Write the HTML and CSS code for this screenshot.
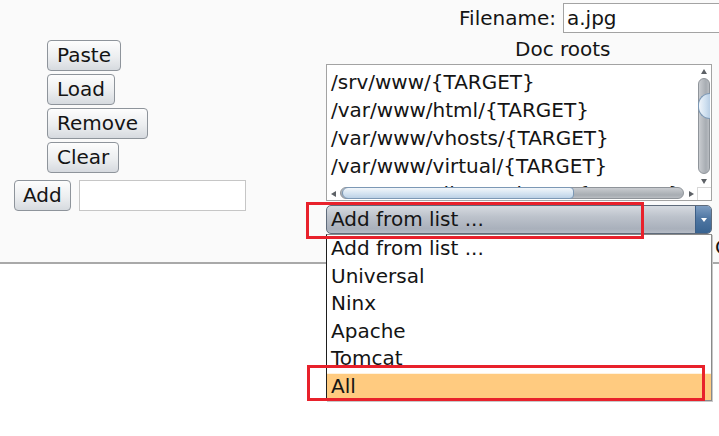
FILE: index.html
```html
<!DOCTYPE html>
<html>
<head>
<meta charset="utf-8">
<link rel="stylesheet" href="styles.css">
</head>
<body>
<div class="panel">
  <div class="left">
    <div class="btn-stack">
      <button class="btn">Paste</button>
      <button class="btn">Load</button>
      <button class="btn">Remove</button>
      <button class="btn">Clear</button>
    </div>
    <div class="add-row">
      <button class="btn btn-add">Add</button>
      <input class="add-field" type="text">
    </div>
  </div>
  <div class="right">
    <div class="fname-row">
      <span class="fname-label">Filename:</span>
      <input class="fname-input" type="text" value="a.jpg">
    </div>
    <div class="doc-label">Doc roots</div>
    <div class="listbox">
      <div class="list-view">
        <div class="list-rows">
          <div class="list-row">/var/www/{TARGET}</div>
          <div class="list-row">/srv/www/{TARGET}</div>
          <div class="list-row">/var/www/html/{TARGET}</div>
          <div class="list-row">/var/www/vhosts/{TARGET}</div>
          <div class="list-row">/var/www/virtual/{TARGET}</div>
          <div class="list-row">/var/www/clients/vhosts/{TARGET}</div>
        </div>
      </div>
      <div class="vscroll">
        <div class="arrow"><span class="tri tri-up"></span></div>
        <div class="vtrack"><div class="vthumb"></div></div>
        <div class="arrow"><span class="tri tri-down"></span></div>
      </div>
      <div class="hscroll">
        <div class="harrow"><span class="tri tri-left"></span></div>
        <div class="htrack"><div class="hthumb"></div></div>
        <div class="harrow"><span class="tri tri-right"></span></div>
      </div>
      <div class="corner"></div>
    </div>
    <div class="combo">
      <span class="combo-text">Add from list ...</span>
      <span class="combo-btn"><span class="tri tri-white"></span></span>
    </div>
    <div class="clip-row">Custom</div>
  </div>
</div>

<div class="popup">
  <div class="pop-row">Add from list ...</div>
  <div class="pop-row">Universal</div>
  <div class="pop-row">Ninx</div>
  <div class="pop-row">Apache</div>
  <div class="pop-row">Tomcat</div>
  <div class="pop-row selected">All</div>
</div>

<div class="mark mark-combo"></div>
<div class="mark mark-all"></div>
</body>
</html>
```

FILE: styles.css
```css
html, body {
  margin: 0;
  padding: 0;
}
body {
  width: 719px;
  height: 436px;
  overflow: hidden;
  position: relative;
  background: #ffffff;
  font-family: "DejaVu Sans", sans-serif;
  font-size: 20px;
  color: #141414;
}

.panel {
  display: flex;
  height: 262px;
  background: #fafafa;
  border-bottom: 2px solid #a9a9a9;
}

/* left column */
.left {
  width: 326px;
  flex: none;
  padding-top: 40px;
  display: flex;
  flex-direction: column;
}
.btn-stack {
  margin-left: 47px;
  display: flex;
  flex-direction: column;
  align-items: flex-start;
  gap: 3px;
}
.btn {
  height: 31px;
  box-sizing: border-box;
  padding: 0 9px;
  margin: 0;
  font-family: "DejaVu Sans", sans-serif;
  font-size: 20px;
  color: #141414;
  border: 1px solid #8e949b;
  border-radius: 4px;
  background: linear-gradient(#fdfdfd, #eceef0 55%, #d6dadf);
  line-height: 27px;
}
.btn-add {
  padding: 0 8px;
}
.add-row {
  margin-top: 7px;
  margin-left: 14px;
  display: flex;
  gap: 8px;
  align-items: flex-start;
}
.add-field {
  width: 167px;
  height: 31px;
  box-sizing: border-box;
  margin: 0;
  border: 1px solid #c6c6c6;
  background: #ffffff;
}

/* right column */
.right {
  flex: 1;
  min-width: 0;
  display: flex;
  flex-direction: column;
}
.fname-row {
  margin-top: 3px;
  display: flex;
  justify-content: flex-end;
  align-items: center;
  gap: 7px;
  margin-right: -4px;
}
.fname-label {
  line-height: 30px;
}
.fname-input {
  width: 160px;
  height: 30px;
  box-sizing: border-box;
  margin: 0;
  padding: 0 3px;
  border: 1px solid #a3a3a3;
  background: #ffffff;
  font-family: "DejaVu Sans", sans-serif;
  font-size: 20px;
  color: #141414;
}
.doc-label {
  margin-top: 5px;
  padding-left: 189px;
  line-height: 22px;
  height: 22px;
}

.listbox {
  margin-top: 4px;
  width: 386px;
  height: 137px;
  box-sizing: border-box;
  border: 1px solid #a3a3a3;
  background: #ffffff;
  display: grid;
  grid-template-columns: 1fr 14px;
  grid-template-rows: 1fr 13px;
}
.list-view {
  overflow: hidden;
  padding-left: 4px;
}
.list-rows {
  margin-top: -25px;
}
.list-row {
  line-height: 28px;
  height: 28px;
  white-space: nowrap;
}

.vscroll {
  display: flex;
  flex-direction: column;
  background: #ffffff;
}
.arrow {
  height: 12px;
  display: flex;
  align-items: center;
  justify-content: center;
}
.vtrack {
  flex: 1;
  margin: 1px 1px;
  border-radius: 7px;
  background: linear-gradient(to right, #c9ccd0, #a7acb2 70%, #b9bdc2);
  border: 1px solid #8f949a;
  position: relative;
}
.vthumb {
  position: absolute;
  left: -1px;
  right: -1px;
  top: 14px;
  height: 24px;
  border-radius: 12px 0 0 12px;
  background: linear-gradient(to right, #f0f5fa, #cfe0f0 60%, #b8cee4);
  border: 1px solid #7c98b5;
  border-right: none;
}
.hscroll {
  display: flex;
  align-items: stretch;
  background: #ffffff;
}
.harrow {
  width: 12px;
  display: flex;
  align-items: center;
  justify-content: center;
}
.htrack {
  flex: 1;
  margin: 0 1px 1px;
  border-radius: 7px;
  background: linear-gradient(#c9ccd0, #a7acb2 70%, #b9bdc2);
  border: 1px solid #8f949a;
  position: relative;
}
.hthumb {
  position: absolute;
  top: -1px;
  bottom: -1px;
  left: 1px;
  width: 230px;
  border-radius: 12px 8px 8px 12px;
  background: linear-gradient(#f2f6fa, #d4e3f1 55%, #bcd1e6);
  border: 1px solid #7c98b5;
}
.corner {
  background: #ffffff;
  border-left: 1px solid #d8d8d8;
  border-top: 1px solid #d8d8d8;
}
.tri {
  width: 0;
  height: 0;
  display: block;
}
.tri-up {
  border-left: 3px solid transparent;
  border-right: 3px solid transparent;
  border-bottom: 5px solid #5d6166;
}
.tri-down {
  border-left: 3px solid transparent;
  border-right: 3px solid transparent;
  border-top: 5px solid #5d6166;
}
.tri-left {
  border-top: 3px solid transparent;
  border-bottom: 3px solid transparent;
  border-right: 5px solid #5d6166;
}
.tri-right {
  border-top: 3px solid transparent;
  border-bottom: 3px solid transparent;
  border-left: 5px solid #5d6166;
}
.tri-white {
  border-left: 3px solid transparent;
  border-right: 3px solid transparent;
  border-top: 4px solid #ffffff;
}

.combo {
  margin-top: 4px;
  width: 386px;
  height: 29px;
  box-sizing: border-box;
  border: 1px solid #5f6b7b;
  border-radius: 5px;
  background: linear-gradient(#d6dae0, #bcc2cb 40%, #a9b0bb 85%, #b6bcc6);
  display: flex;
  overflow: hidden;
}
.combo-text {
  flex: 1;
  padding-left: 4px;
  line-height: 27px;
  white-space: nowrap;
}
.combo-btn {
  width: 15px;
  background: linear-gradient(#7d9dc2, #5077a3 45%, #386391);
  border-left: 1px solid #3c5e86;
  display: flex;
  align-items: center;
  justify-content: center;
}
.clip-row {
  margin-top: 2px;
  padding-left: 389px;
  line-height: 22px;
  white-space: nowrap;
}

/* opened drop-down list (overlay) */
.popup {
  position: absolute;
  left: 326px;
  top: 234px;
  width: 386px;
  box-sizing: border-box;
  background: #ffffff;
  border: 1px solid #8a8a8a;
  border-left-color: #1e1e1e;
  box-shadow: 1px 1px 0 #c8c8c8;
}
.pop-row {
  height: 27.5px;
  line-height: 27.5px;
  padding-left: 4px;
  white-space: nowrap;
}
.pop-row.selected {
  background: #ffcb80;
  box-shadow: inset 0 1px 0 #fff3e0;
}

/* red annotation boxes */
.mark {
  position: absolute;
  box-sizing: border-box;
  border: 3px solid #e8212b;
}
.mark-combo {
  left: 306px;
  top: 202px;
  width: 338px;
  height: 37px;
}
.mark-all {
  left: 307px;
  top: 365px;
  width: 398px;
  height: 36px;
}
```
